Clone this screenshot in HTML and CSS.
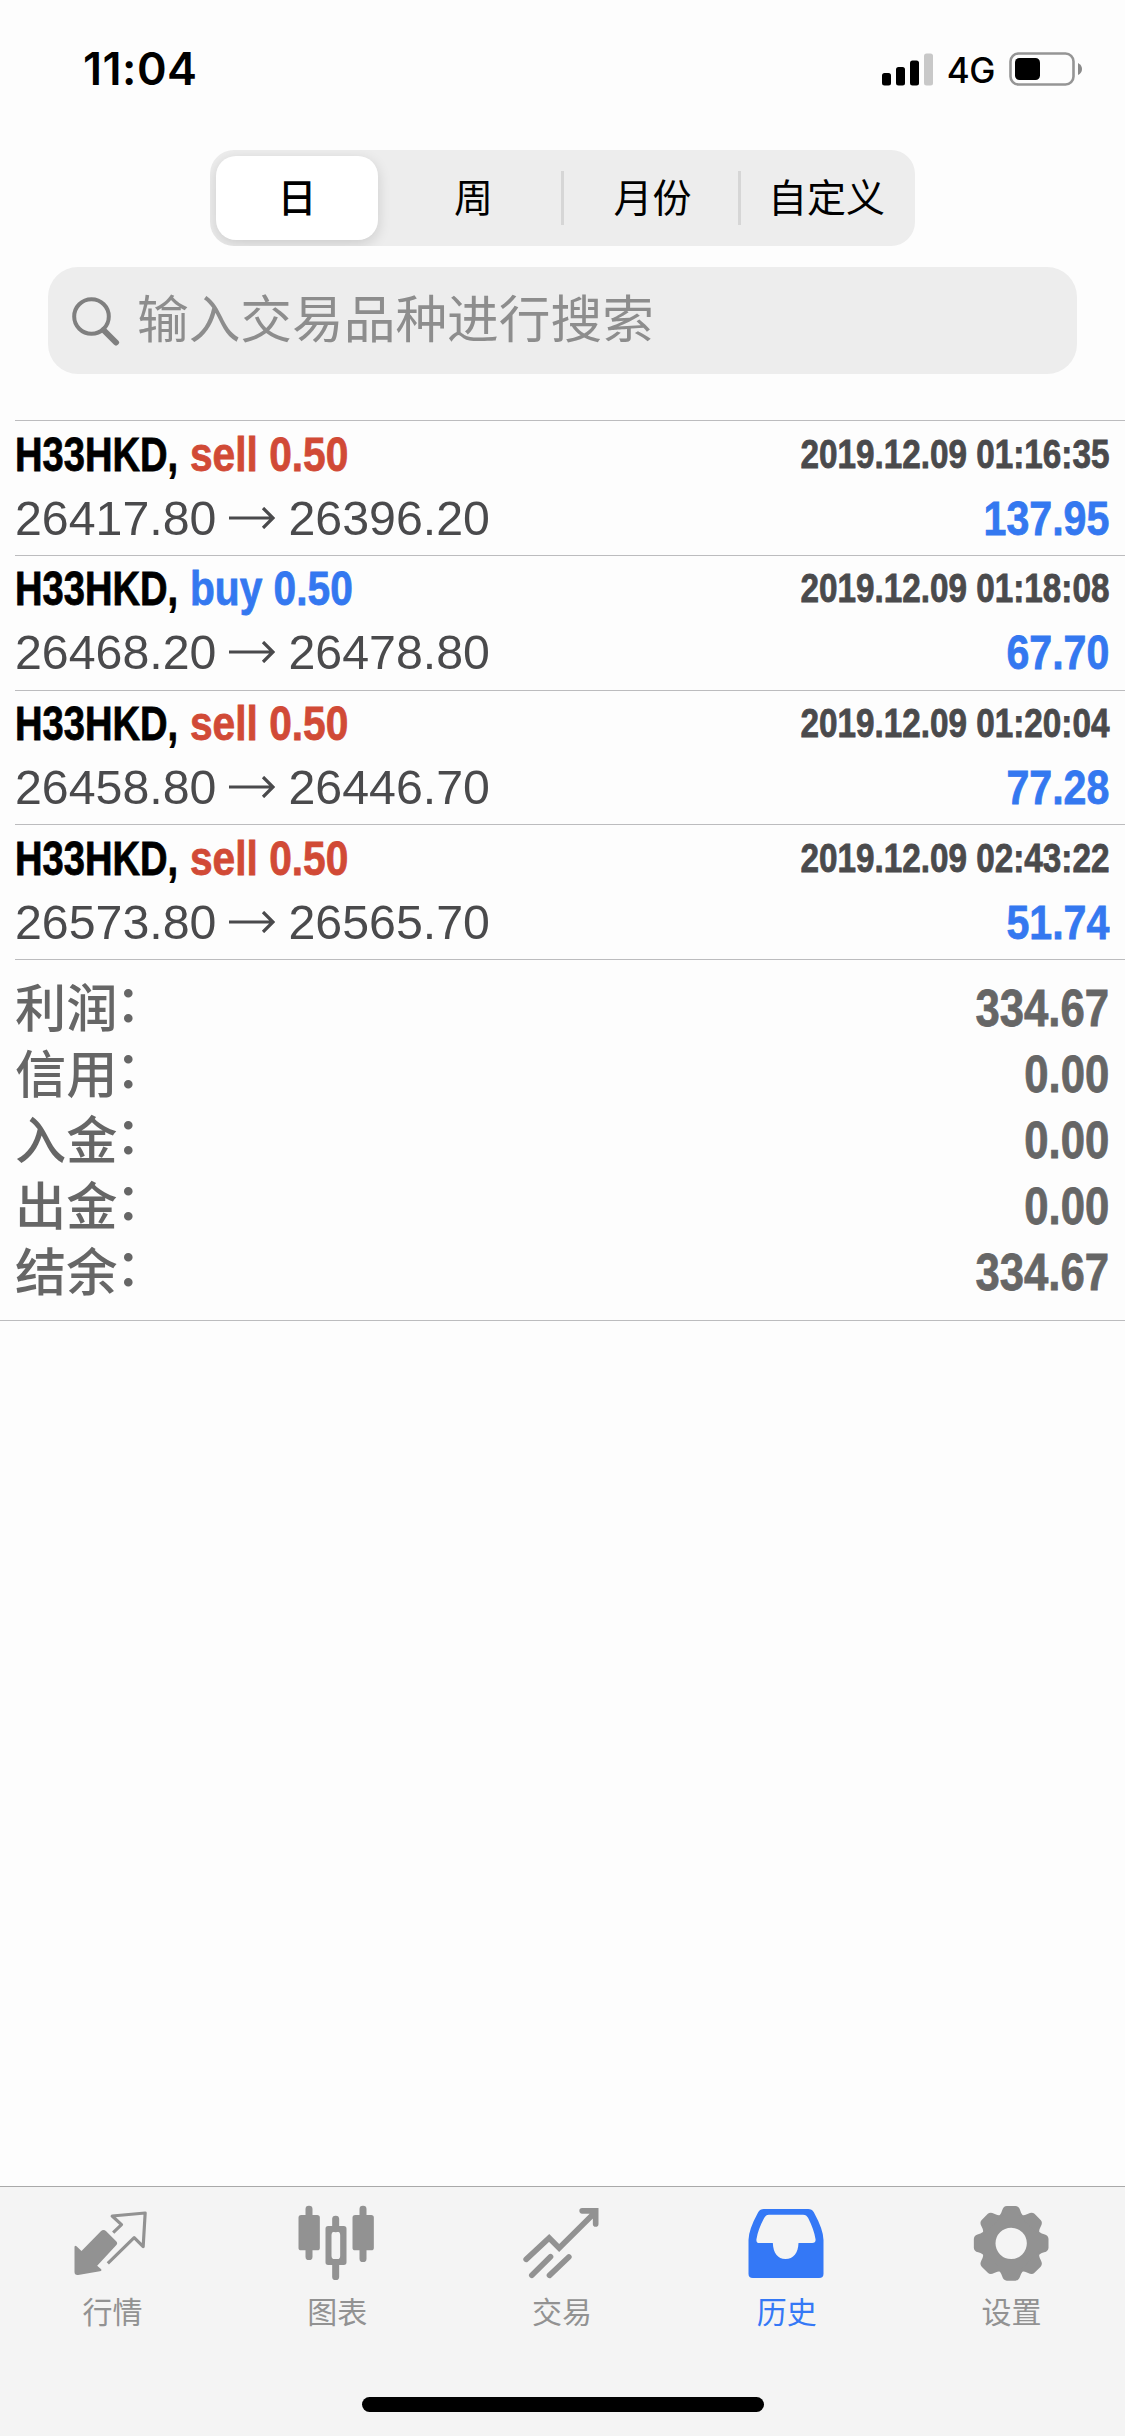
FILE: index.html
```html
<!DOCTYPE html>
<html lang="zh-CN">
<head>
<meta charset="utf-8">
<title>历史</title>
<link rel="stylesheet" href="styles.css">
</head>
<body>
<svg width="0" height="0" class="defs">
  <symbol id="arrow" viewBox="0 0 46 22"><path d="M0 11H44M34 1L44 11L34 21" fill="none" stroke="#4a4a4c" stroke-width="3.2"/></symbol>
</svg>
<div class="screen">
  <header class="status">
    <span class="time">11:04</span>
    <div class="status-right">
      <svg class="signal" viewBox="0 0 52 33"><rect y="20" width="9" height="12.500" rx="2.500"/><rect x="14" y="14" width="9" height="18.500" rx="2.500"/><rect x="28" y="7.500" width="9" height="25" rx="2.500"/><rect x="42" y="0.500" width="9" height="32" rx="2.500" fill="#c8c8c8"/></svg>
      <span class="network">4G</span>
      <svg class="battery" viewBox="0 0 74 34"><rect x="1.500" y="1.500" width="63" height="31" rx="8" fill="none" stroke="#959595" stroke-width="2.600"/><rect x="6" y="6" width="25" height="22" rx="4.500"/><path d="M69 11Q73 13 73 17Q73 21 69 23Z" fill="#8a8a8a"/></svg>
    </div>
  </header>

  <nav class="segments">
    <span class="segment segment-active">日</span>
    <span class="segment segment-week">周</span>
    <span class="segment segment-split">月份</span>
    <span class="segment segment-split">自定义</span>
  </nav>

  <div class="search">
    <svg class="search-icon" viewBox="0 0 48 50"><circle cx="19.500" cy="20.500" r="17.300" fill="none" stroke="#7f7f7f" stroke-width="4"/><path d="M31.500 34L44 46.500" stroke="#7f7f7f" stroke-width="6" stroke-linecap="round"/></svg>
    <span class="placeholder">输入交易品种进行搜索</span>
  </div>

  <main class="deals">
    <article class="deal">
      <div class="line"><div class="title"><span class="symbol">H33HKD,</span><span class="side sell">sell 0.50</span></div><time class="date">2019.12.09 01:16:35</time></div>
      <div class="line"><span class="prices">26417.80<svg class="arrow"><use href="#arrow"/></svg>26396.20</span><span class="profit">137.95</span></div>
    </article>
    <article class="deal">
      <div class="line"><div class="title"><span class="symbol">H33HKD,</span><span class="side buy">buy 0.50</span></div><time class="date">2019.12.09 01:18:08</time></div>
      <div class="line"><span class="prices">26468.20<svg class="arrow"><use href="#arrow"/></svg>26478.80</span><span class="profit">67.70</span></div>
    </article>
    <article class="deal">
      <div class="line"><div class="title"><span class="symbol">H33HKD,</span><span class="side sell">sell 0.50</span></div><time class="date">2019.12.09 01:20:04</time></div>
      <div class="line"><span class="prices">26458.80<svg class="arrow"><use href="#arrow"/></svg>26446.70</span><span class="profit">77.28</span></div>
    </article>
    <article class="deal">
      <div class="line"><div class="title"><span class="symbol">H33HKD,</span><span class="side sell">sell 0.50</span></div><time class="date">2019.12.09 02:43:22</time></div>
      <div class="line"><span class="prices">26573.80<svg class="arrow"><use href="#arrow"/></svg>26565.70</span><span class="profit">51.74</span></div>
    </article>
  </main>

  <section class="summary">
    <div class="total"><span class="label">利润<span class="colon">：</span></span><span class="amount">334.67</span></div>
    <div class="total"><span class="label">信用<span class="colon">：</span></span><span class="amount">0.00</span></div>
    <div class="total"><span class="label">入金<span class="colon">：</span></span><span class="amount">0.00</span></div>
    <div class="total"><span class="label">出金<span class="colon">：</span></span><span class="amount">0.00</span></div>
    <div class="total"><span class="label">结余<span class="colon">：</span></span><span class="amount">334.67</span></div>
  </section>

  <footer class="tabbar">
    <div class="tabs">
      <div class="tab">
        <svg class="tab-icon" viewBox="211.5 96 252 252"><path d="M225 232Q225 224 231 229L246 243L304 184Q312 176 320 184L350 214Q356 220 350 226L293 287L305 298Q308 303 301 304L236 315Q225 316 225 306Z" fill="currentColor"/><path d="M341 188L366 164L338 138L437 129L431 230L404 203L325 280" fill="none" stroke="currentColor" stroke-width="9.500" stroke-linejoin="round"/></svg>
        <span>行情</span>
      </div>
      <div class="tab">
        <svg class="tab-icon" viewBox="886.5 96 252 252" fill="currentColor"><rect x="897" y="135" width="64" height="106" rx="8"/><rect x="918" y="107" width="21" height="163" rx="10"/><rect x="1059" y="135" width="64" height="106" rx="8"/><rect x="1080" y="107" width="21" height="169" rx="10"/><rect x="998" y="137" width="21" height="50" rx="10"/><rect x="998" y="270" width="21" height="60" rx="10"/><path fill-rule="evenodd" d="M986 168H1033Q1041 168 1041 176V277Q1041 285 1033 285H986Q978 285 978 277V176Q978 168 986 168ZM1005 185Q996 185 996 195V257Q996 267 1005 267H1014Q1022 267 1022 257V195Q1022 185 1014 185Z"/></svg>
        <span>图表</span>
      </div>
      <div class="tab">
        <svg class="tab-icon" viewBox="361.5 96 252 252" fill="none" stroke="currentColor" stroke-width="17" stroke-linecap="round"><path d="M380 268L449 204L479 234L587 127M548 122.500H588.500V162"/><path d="M397 316L453 260M450 316L508 261"/></svg>
        <span>交易</span>
      </div>
      <div class="tab tab-active">
        <svg class="tab-icon" viewBox="61.5 96 252 252"><path fill="currentColor" fill-rule="evenodd" d="M118 117H251Q262 117 268 127Q297 180 297 210V311Q297 324 284 324H85Q72 324 72 311V210Q72 180 101 127Q107 117 118 117ZM133 134Q124 134 119 144Q100 180 96 207Q94 219 105 219H145C146 249 160 267 183 267C207 267 221 249 222 219H263Q275 219 273 207Q269 180 251 144Q246 134 236 134Z"/></svg>
        <span>历史</span>
      </div>
      <div class="tab">
        <svg class="tab-icon" viewBox="736.5 96 252 252"><defs><path id="tooth" d="M-44 -76Q-31 -84 -27 -99Q-23 -112 -13 -112H13Q23 -112 27 -99Q31 -84 44 -76Z" fill="currentColor"/></defs><g transform="translate(860 220)"><circle r="67" fill="none" stroke="currentColor" stroke-width="40"/><use href="#tooth"/><use href="#tooth" transform="rotate(45)"/><use href="#tooth" transform="rotate(90)"/><use href="#tooth" transform="rotate(135)"/><use href="#tooth" transform="rotate(180)"/><use href="#tooth" transform="rotate(225)"/><use href="#tooth" transform="rotate(270)"/><use href="#tooth" transform="rotate(315)"/></g></svg>
        <span>设置</span>
      </div>
    </div>
    <div class="home-indicator"></div>
  </footer>
</div>
</body>
</html>
```
FILE: styles.css
```css
* { box-sizing: border-box; }

body {
  margin: 0;
  background: #fdfdfd;
  color: #000;
  font-family: Inter, "Noto Sans CJK SC", sans-serif;
}

.defs { display: block; }

.screen {
  width: 1125px;
  height: 2436px;
  display: flex;
  flex-direction: column;
}

.status {
  height: 150px;
  padding: 39px 42px 0 83px;
  display: flex;
  justify-content: space-between;
  align-items: flex-start;
}

.time {
  font-size: 45px;
  font-weight: 600;
  line-height: 60px;
  letter-spacing: 0.500px;
}

.status-right {
  display: flex;
  align-items: center;
  padding-top: 13px;
  height: 47px;
}

.signal { width: 52px; height: 33px; }
.network { font-size: 35px; font-weight: 500; line-height: 34px; margin: 1px 14px 0 13px; letter-spacing: -0.500px; }
.battery { width: 74px; height: 34px; }

.segments {
  width: 705px;
  height: 96px;
  margin: 0 auto;
  padding: 6px;
  display: grid;
  grid-template-columns: 162px 1fr 177px 171px;
  align-items: center;
  border-radius: 24px;
  background: #ededed;
  overflow: hidden;
}

.segment {
  height: 84px;
  font: 400 39px/79px "Noto Sans CJK SC", sans-serif;
  text-align: center;
}

.segment-active {
  font-weight: 500;
  border-radius: 20px;
  background: #fff;
  box-shadow: 0 4px 14px rgba(0, 0, 0, 0.14);
}

.segment-week { padding-left: 8px; }

.segment-split {
  height: 54px;
  line-height: 49px;
  padding-left: 3px;
  border-left: 3px solid #d6d6d6;
}

.search {
  width: 1029px;
  height: 107px;
  margin: 21px 48px 46px;
  padding-left: 24px;
  display: flex;
  align-items: center;
  gap: 17px;
  border-radius: 30px;
  background: #ededed;
  color: #8d8d8d;
  font: 400 51.700px/74px "Noto Sans CJK SC", sans-serif;
}

.search-icon { width: 48px; height: 50px; }
.placeholder { padding-bottom: 9px; }

.deals {
  margin-left: 15px;
  border-bottom: 1px solid #bcbcbe;
}

.deal {
  height: 134.750px;
  padding: 2px 16px 0 0;
  border-top: 1px solid #bcbcbe;
}

.line {
  height: 63px;
  display: flex;
  justify-content: space-between;
  align-items: center;
}

/* Condensed bold: the regular-width bold face, narrowed horizontally. */
.symbol, .side, .date, .profit, .amount {
  font-family: "Liberation Sans", sans-serif;
  font-weight: 700;
  line-height: 60px;
  white-space: nowrap;
  -webkit-text-stroke: 0.800px currentColor;
}

.title { display: flex; margin-top: -2px; font-size: 49px; }

.symbol {
  margin-right: -35px;
  transform: scaleX(0.778);
  transform-origin: left;
}

.side {
  transform: scaleX(0.83);
  transform-origin: left;
}

.sell { color: #d14a36; }
.buy, .profit { color: #3478f0; }

.date, .profit, .amount { transform-origin: right; }
.date { margin-top: -2px; font-size: 40px; color: #4a4a4c; transform: scaleX(0.832); }
.profit { font-size: 48.500px; transform: scaleX(0.848); }
.amount { margin-top: 2px; font-size: 51px; color: #666; transform: scaleX(0.856); }

.prices {
  display: flex;
  align-items: center;
  color: #4a4a4c;
  font: 400 48.300px/60px "Liberation Sans", sans-serif;
}

.arrow { width: 46px; height: 22px; margin: 0 13px; }

.summary {
  height: 361px;
  padding: 15px 16px 0 15px;
  border-bottom: 1px solid #bcbcbe;
}

.total {
  height: 66px;
  display: flex;
  justify-content: space-between;
  align-items: center;
}

.label {
  padding-bottom: 6px;
  color: #666;
  font: 500 51.200px/60px "Noto Sans CJK SC", sans-serif;
}

.colon { margin-left: -2px; line-height: 0; vertical-align: 5px; }

.tabbar {
  height: 250px;
  margin-top: auto;
  border-top: 1px solid #a9a9a9;
  background: #f4f4f4;
}

.tabs {
  height: 210px;
  padding: 15px 1px 0 0;
  display: grid;
  grid-template-columns: repeat(5, 1fr);
}

.tab {
  display: flex;
  flex-direction: column;
  align-items: center;
  color: #929292;
  font: 400 30px/44px "Noto Sans CJK SC", sans-serif;
}

.tab-active { color: #3478f6; }
.tab-icon { width: 84px; height: 84px; margin-bottom: 2px; }

.home-indicator {
  width: 402px;
  height: 15px;
  margin: 0 auto;
  border-radius: 8px;
  background: #000;
}
```
